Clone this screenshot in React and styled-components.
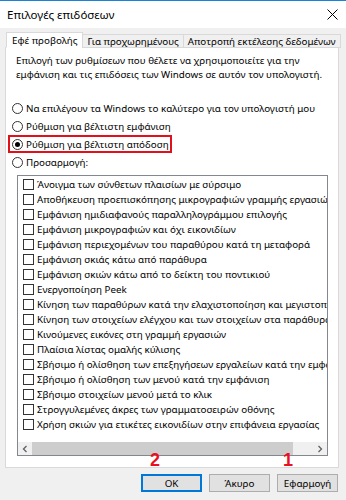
import React from "react";
import styled, { createGlobalStyle } from "styled-components";

const Global = createGlobalStyle`
  html, body { margin: 0; padding: 0; background: #f0f0f0; }
  body { font-family: "Noto Sans", "Open Sans", sans-serif; }
  #root { width: 346px; height: 500px; }
`;

const Window = styled.div`
  width: 346px;
  height: 500px;
  display: flex;
  flex-direction: column;
  background: #f0f0f0;
  overflow: hidden;
  color: #000;
  font-family: "Noto Sans", sans-serif;
  font-size: 9.8px;
`;

const TitleBar = styled.div`
  height: 27px;
  background: #fff;
  border-top: 1px solid #1883d7;
  display: flex;
  align-items: center;
  justify-content: space-between;
  padding: 0 8px 0 7px;
`;

const Title = styled.span`
  font-size: 11.5px;
  color: #000;
`;

const Close = styled.svg`
  width: 11px;
  height: 11px;
`;

const Body = styled.div`
  flex: 1;
  display: flex;
  flex-direction: column;
  padding: 4px 7px 0 5px;
`;

const Tabs = styled.div`
  display: flex;
  align-items: flex-end;
  height: 16px;
  position: relative;
  z-index: 1;
  margin-bottom: -1px;
`;

const Tab = styled.div`
  height: ${p => (p.$active ? "16px" : "14px")};
  margin-left: ${p => (p.$first ? "1px" : "-1px")};
  padding: 0 ${p => (p.$active ? "5px" : "4px")};
  display: flex;
  align-items: center;
  background: ${p => (p.$active ? "#fff" : "#f0f0f0")};
  border: 1px solid #d9d9d9;
  border-bottom: ${p => (p.$active ? "1px solid #fff" : "1px solid #d9d9d9")};
  box-sizing: border-box;
  white-space: nowrap;
  font-size: 9.8px;
`;

const Panel = styled.div`
  height: 421px;
  background: #fff;
  border: 1px solid #d9d9d9;
  box-sizing: border-box;
  display: flex;
  flex-direction: column;
  padding: 6px 10px 0 6px;
  position: relative;
`;

const Desc = styled.p`
  margin: 0 0 0 4px;
  line-height: 14px;
  font-size: 9.8px;
`;

const RadioList = styled.div`
  display: flex;
  flex-direction: column;
  margin-top: 17px;
`;

const RadioRow = styled.div`
  height: 18px;
  display: flex;
  align-items: center;
  gap: 3px;
  position: relative;
  white-space: nowrap;
`;

const Highlight = styled.div`
  position: absolute;
  left: -4px;
  top: 0;
  width: 164px;
  height: 18px;
  border: 2px solid #e1101b;
  box-sizing: border-box;
  pointer-events: none;
`;

const RadioDot = styled.span`
  width: 11px;
  height: 11px;
  border-radius: 50%;
  border: 1px solid #333;
  box-sizing: border-box;
  display: flex;
  align-items: center;
  justify-content: center;
  flex: none;
  &::after {
    content: "";
    width: 5px;
    height: 5px;
    border-radius: 50%;
    background: ${p => (p.$checked ? "#000" : "transparent")};
  }
`;

const ListBox = styled.div`
  margin: 4px 0 0 5px;
  height: 281px;
  border: 1px solid #828790;
  box-sizing: border-box;
  display: flex;
  flex-direction: column;
  overflow: hidden;
`;

const Items = styled.div`
  flex: 1;
  padding-top: 1px;
  overflow: hidden;
`;

const Item = styled.div`
  height: 15px;
  display: flex;
  align-items: center;
  gap: 3px;
  padding-left: 5px;
  white-space: nowrap;
`;

const Box = styled.span`
  width: 11px;
  height: 11px;
  border: 1px solid #333;
  box-sizing: border-box;
  flex: none;
  background: #fff;
`;

const HScroll = styled.div`
  height: 13px;
  display: flex;
  align-items: center;
  background: #f0f0f0;
  flex: none;
`;

const Arrow = styled.div`
  width: 14px;
  height: 13px;
  display: flex;
  align-items: center;
  justify-content: center;
  flex: none;
  color: #606060;
`;

const Track = styled.div`
  flex: 1;
  height: 13px;
  display: flex;
`;

const Thumb = styled.div`
  height: 13px;
  background: #cdcdcd;
`;

const Marker = styled.span`
  position: absolute;
  bottom: -1px;
  color: #e81123;
  font-family: "Liberation Sans", Arial, sans-serif;
  font-weight: bold;
  font-size: 18px;
  line-height: 16px;
`;

const Footer = styled.div`
  display: flex;
  justify-content: flex-end;
  gap: 7px;
  padding: 6px 0 0;
  margin-right: 1px;
`;

const Button = styled.button`
  width: ${p => p.$w || 61}px;
  height: 18px;
  padding: 0;
  margin: 0;
  background: #e1e1e1;
  border: 1px solid ${p => (p.$default ? "#0078d7" : "#adadad")};
  box-shadow: ${p => (p.$default ? "inset 0 0 0 1px #0078d7" : "none")};
  font-family: "Noto Sans", sans-serif;
  font-size: 9.8px;
  color: #000;
`;

const items = [
  "Άνοιγμα των σύνθετων πλαισίων με σύρσιμο",
  "Αποθήκευση προεπισκόπησης μικρογραφιών γραμμής εργασιών",
  "Εμφάνιση ημιδιαφανούς παραλληλογράμμου επιλογής",
  "Εμφάνιση μικρογραφιών και όχι εικονιδίων",
  "Εμφάνιση περιεχομένων του παραθύρου κατά τη μεταφορά",
  "Εμφάνιση σκιάς κάτω από παράθυρα",
  "Εμφάνιση σκιών κάτω από το δείκτη του ποντικιού",
  "Ενεργοποίηση Peek",
  "Κίνηση των παραθύρων κατά την ελαχιστοποίηση και μεγιστοποίηση",
  "Κίνηση των στοιχείων ελέγχου και των στοιχείων στα παράθυρα",
  "Κινούμενες εικόνες στη γραμμή εργασιών",
  "Πλαίσια λίστας ομαλής κύλισης",
  "Σβήσιμο ή ολίσθηση των επεξηγήσεων εργαλείων κατά την εμφάνιση",
  "Σβήσιμο ή ολίσθηση των μενού κατά την εμφάνιση",
  "Σβήσιμο στοιχείων μενού μετά το κλικ",
  "Στρογγυλεμένες άκρες των γραμματοσειρών οθόνης",
  "Χρήση σκιών για ετικέτες εικονιδίων στην επιφάνεια εργασίας",
];

const radios = [
  "Να επιλέγουν τα Windows το καλύτερο για τον υπολογιστή μου",
  "Ρύθμιση για βέλτιστη εμφάνιση",
  "Ρύθμιση για βέλτιστη απόδοση",
  "Προσαρμογή:",
];

const Chevron = ({ dir }) => (
  <svg width="6" height="8" viewBox="0 0 6 8">
    <path
      d={dir === "left" ? "M4.5 1 L1.5 4 L4.5 7" : "M1.5 1 L4.5 4 L1.5 7"}
      fill="none"
      stroke="#606060"
      strokeWidth="1.3"
    />
  </svg>
);

export default function App() {
  return (
    <>
      <Global />
      <Window>
        <TitleBar>
          <Title>Επιλογές επιδόσεων</Title>
          <Close viewBox="0 0 11 11">
            <path d="M0.5 0.5 L10.5 10.5 M10.5 0.5 L0.5 10.5" stroke="#000" strokeWidth="1" />
          </Close>
        </TitleBar>
        <Body>
          <Tabs>
            <Tab $active $first>Εφέ προβολής</Tab>
            <Tab>Για προχωρημένους</Tab>
            <Tab>Αποτροπή εκτέλεσης δεδομένων</Tab>
          </Tabs>
          <Panel>
            <Desc>
              Επιλογή των ρυθμίσεων που θέλετε να χρησιμοποιείτε για την
              <br />
              εμφάνιση και τις επιδόσεις των Windows σε αυτόν τον υπολογιστή.
            </Desc>
            <RadioList>
              {radios.map((r, i) => (
                <RadioRow key={r}>
                  <RadioDot $checked={i === 2} />
                  <span>{r}</span>
                  {i === 2 && <Highlight />}
                </RadioRow>
              ))}
            </RadioList>
            <ListBox>
              <Items>
                {items.map(t => (
                  <Item key={t}>
                    <Box />
                    <span>{t}</span>
                  </Item>
                ))}
              </Items>
              <HScroll>
                <Arrow><Chevron dir="left" /></Arrow>
                <Track>
                  <Thumb style={{ width: "93%" }} />
                </Track>
                <Arrow><Chevron dir="right" /></Arrow>
              </HScroll>
            </ListBox>
            <Marker style={{ left: 144 }}>2</Marker>
            <Marker style={{ left: 277 }}>1</Marker>
          </Panel>
          <Footer>
            <Button $default>OK</Button>
            <Button>Άκυρο</Button>
            <Button>Εφαρμογή</Button>
          </Footer>
        </Body>
      </Window>
    </>
  );
}
